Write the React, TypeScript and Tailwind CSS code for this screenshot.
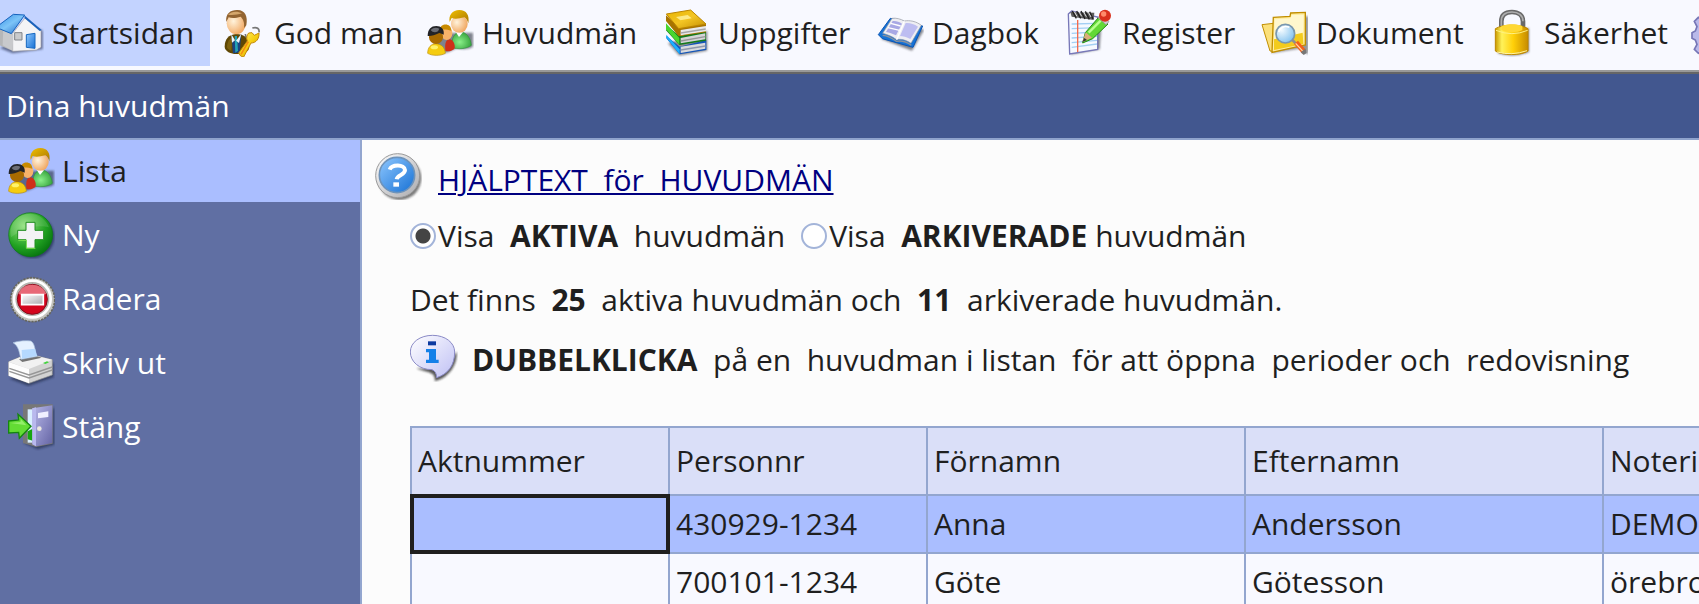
import { useState, type ReactNode } from "react";

interface IconProps {
  box: string;
  children: ReactNode;
}

// All icons are drawn on a 144 unit square and shown at 48px
function Icon({ box, children }: IconProps) {
  return (
    <svg viewBox={box} className="size-12 shrink-0" aria-hidden="true">
      {children}
    </svg>
  );
}

function Gradients() {
  return (
    <svg className="absolute size-0" aria-hidden="true">
      <defs>
        <linearGradient id="roof" x1="0" y1="0" x2="1" y2="1">
          <stop offset="0" stopColor="#2f8ae0" />
          <stop offset=".5" stopColor="#7cc4f8" />
          <stop offset="1" stopColor="#1c66c4" />
        </linearGradient>
        <linearGradient id="grey" x1="0" y1="0" x2="1" y2="1">
          <stop offset="0" stopColor="#ffffff" />
          <stop offset="1" stopColor="#a9a9ad" />
        </linearGradient>
        <linearGradient id="gold" x1="0" y1="0" x2="1" y2="1">
          <stop offset="0" stopColor="#fff27a" />
          <stop offset=".5" stopColor="#f7cf12" />
          <stop offset="1" stopColor="#b98300" />
        </linearGradient>
        <linearGradient id="cover" x1="0" y1="0" x2="1" y2="1">
          <stop offset="0" stopColor="#e8b400" />
          <stop offset=".5" stopColor="#f3c524" />
          <stop offset="1" stopColor="#c48e00" />
        </linearGradient>
        <linearGradient id="hair" x1="0" y1="0" x2="1" y2="1">
          <stop offset="0" stopColor="#f0c000" />
          <stop offset="1" stopColor="#a87400" />
        </linearGradient>
        <radialGradient id="skin" cx=".35" cy=".4" r=".7">
          <stop offset="0" stopColor="#fff3dc" />
          <stop offset="1" stopColor="#f0a35a" />
        </radialGradient>
        <radialGradient id="green" cx=".35" cy=".3" r=".8">
          <stop offset="0" stopColor="#8fe07a" />
          <stop offset=".6" stopColor="#22a322" />
          <stop offset="1" stopColor="#026c0c" />
        </radialGradient>
        <radialGradient id="shirt" cx=".4" cy=".6" r=".7">
          <stop offset="0" stopColor="#8af08a" />
          <stop offset="1" stopColor="#2c9a34" />
        </radialGradient>
        <radialGradient id="lens" cx=".3" cy=".3" r=".8">
          <stop offset="0" stopColor="#f4fbff" />
          <stop offset="1" stopColor="#7fc0ee" />
        </radialGradient>
        <linearGradient id="blue" x1="0" y1="0" x2="1" y2="1">
          <stop offset="0" stopColor="#8fc8ff" />
          <stop offset="1" stopColor="#1670d4" />
        </linearGradient>
        <linearGradient id="brass" x1="0" y1="0" x2="1" y2="0">
          <stop offset="0" stopColor="#c89a00" />
          <stop offset=".2" stopColor="#fff25a" />
          <stop offset=".55" stopColor="#ffcf08" />
          <stop offset="1" stopColor="#c78c00" />
        </linearGradient>
        <linearGradient id="bubble" x1="0" y1="0" x2="1" y2="1">
          <stop offset="0" stopColor="#ffffff" />
          <stop offset="1" stopColor="#bfc0f4" />
        </linearGradient>
        <linearGradient id="door" x1="0" y1="0" x2="1" y2="1">
          <stop offset="0" stopColor="#b9b9ea" />
          <stop offset="1" stopColor="#6464a4" />
        </linearGradient>
        <filter id="soft" x="-20%" y="-20%" width="140%" height="140%">
          <feGaussianBlur stdDeviation="3" />
        </filter>
      </defs>
    </svg>
  );
}

function HouseIcon() {
  return (
    <Icon box="-12 27 144 144">
      <path d="M0 145l38 15 90-12V92l-20-10z" fill="#3a4468" opacity=".7" filter="url(#soft)" />
      <path d="M-10 90l20-8 30 24v48l-50-22z" fill="#b5b6b8" />
      <path d="M38 100l37-46 48 38v50l-14 8-71 4z" fill="#f4f4f6" stroke="#a0a0a8" strokeWidth="2" />
      <path d="M10 84l30 20-2 48-30-16z" fill="#c8c9cc" />
      <path d="M-12 82l52-39 34 2-40 56z" fill="url(#roof)" stroke="#1762bd" strokeWidth="3" />
      <path d="M73 46l52 44-6 3-45-38z" fill="#1a62bb" />
      <path d="M44 98h22v22H44z" fill="#c9cacc" stroke="#808489" strokeWidth="3" />
      <path d="M79 104l26-4v45l-26-3z" fill="url(#blue)" stroke="#1667c0" strokeWidth="3" />
    </Icon>
  );
}

function GuardianIcon() {
  return (
    <Icon box="654 27 144 144">
      <path d="M674 140c0-22 12-36 34-38 24 0 40 12 40 38 0 16-20 22-38 22s-36-8-36-22z" fill="#5f4704" />
      <path d="M681 138c2-14 8-22 16-26l-3 40c-8-2-14-6-13-14z" fill="#8a6c14" opacity=".7" />
      <path d="M694 104l13 24 17-26-5 56-20 2z" fill="#1d447f" />
      <path d="M704 108l7 0 3 44-8 6z" fill="#23a3b6" />
      <path d="M694 103l11 18-9 7zM724 102l-16 20 9 7z" fill="#eef4fc" />
      <ellipse cx="709" cy="70" rx="29" ry="33" fill="url(#skin)" />
      <path d="M679 66c-4-26 14-37 34-36 22 1 31 18 26 46l-7 8c2-16-2-26-10-34-14 5-28 5-36 2z" fill="#936431" />
      <path d="M684 44c10-10 28-12 42-4-14 4-28 6-42 4z" fill="#d4a66b" />
      <path d="M757 84c14-4 22 2 20 13M736 102c0 12 10 18 22 12" fill="none" stroke="#777" strokeWidth="5" />
      <path d="M746 99l10-1 7 8 14-7c1 17-8 30-24 30l-22 42-9-3-6-9 26-36c-4-10-1-18 4-24z" fill="url(#gold)" stroke="#c48b0a" strokeWidth="3" />
      <path d="M723 163l22-38" stroke="#f38c12" strokeWidth="5" />
    </Icon>
  );
}

function PeopleIcon() {
  return (
    <Icon box="20 27 144 144">
      <path d="M34 160c34 10 60-8 78-15 20 5 44 2 49-6V98L60 100z" fill="#1f2430" opacity=".55" filter="url(#soft)" />
      <path d="M98 142c-2-30 8-44 24-46 20 0 32 18 34 40-12 10-42 14-58 6z" fill="url(#shirt)" stroke="#30943c" strokeWidth="2" />
      <path d="M108 94l11 17 12-14z" fill="#fff" />
      <ellipse cx="120" cy="72" rx="25" ry="26" fill="url(#skin)" />
      <path d="M91 66c-4-20 8-36 29-36 22 0 31 16 27 40-2-8-6-14-12-18-16 4-28 6-38 2z" fill="url(#hair)" />
      <path d="M78 152c-2-24 2-34 14-34 12 2 18 24 12 30-8 6-20 8-26 4z" fill="#cf3019" />
      <ellipse cx="82" cy="100" rx="17" ry="20" fill="#f8b36a" />
      <path d="M60 90c4-22 36-22 36 2-12-3-22-5-36-2z" fill="#c98b00" />
      <path d="M25 160c0-18 10-28 24-29 18 1 28 12 29 29-14 8-40 8-53 0z" fill="#f5cc10" stroke="#c29200" strokeWidth="2" />
      <ellipse cx="45" cy="142" rx="11" ry="6" fill="#fff36b" />
      <ellipse cx="50" cy="112" rx="21" ry="20" fill="#a96b00" />
      <path d="M25 108c0-20 10-30 26-30 14 0 25 10 22 26-4-2-10-4-13-5-14 7-26 10-35 9z" fill="#222327" />
      <path d="M34 90c8-8 18-8 26-4l-4 8c-8 4-16 4-22-4z" fill="#6b6d75" />
    </Icon>
  );
}

function BooksIcon() {
  return (
    <Icon box="726 27 144 144">
      <path d="M744 130l34 37 84-15V92z" fill="#222" opacity=".5" filter="url(#soft)" />
      <path d="M739 108l40 32 80-20v30l-80 13-40-48z" fill="#1455b8" />
      <path d="M739 104l40 44v15l-40-50z" fill="#1db0ff" />
      <path d="M782 140l74-12v18l-74 13z" fill="#d9dadd" />
      <path d="M782 150l74-12" stroke="#8d97ad" strokeWidth="4" />
      <path d="M738 76l42 32 78-18v32l-80 13-40-44z" fill="#137a1c" />
      <path d="M738 70l40 44v20l-40-46z" fill="#49d62e" />
      <path d="M782 114l74-14v18l-74 12z" fill="#d4d4d6" />
      <path d="M782 123l74-13" stroke="#979797" strokeWidth="4" />
      <path d="M738 46l44 38 76-13v26l-82 12-38-46z" fill="#a87400" />
      <path d="M782 90l76-12v16l-76 12z" fill="#e8e8ea" />
      <path d="M782 99l75-12" stroke="#a6a6a8" strokeWidth="4" />
      <path d="M739 42l73-12 46 42-82 14z" fill="url(#cover)" stroke="#bb8500" strokeWidth="3" />
      <path d="M768 51l35-6 12 10-34 6z" fill="#fff3a1" opacity=".8" />
    </Icon>
  );
}

function DiaryIcon() {
  return (
    <Icon box="48 27 144 144">
      <path d="M62 116l94 36 36-62-20-10z" fill="#30343c" opacity=".6" filter="url(#soft)" />
      <path d="M55 104l36-49 97 23-29 64-92-26z" fill="#1672d6" stroke="#0b55b4" strokeWidth="3" strokeLinejoin="round" />
      <path d="M68 100l28-45c12-2 26 2 37 8 16-3 36 1 51 13l-31 54c-15-10-29-14-43-11-14-10-30-16-42-19z" fill="#eeeef3" stroke="#8f949d" strokeWidth="2" />
      <path d="M78 96l20-33c10-1 20 2 28 8l-18 35c-10-5-20-8-30-10z" fill="#a8a8e4" />
      <path d="M137 69c13-1 25 3 37 11l-23 37c-11-6-22-8-31-9z" fill="#bdbdf1" />
      <path d="M133 64l-23 55M84 83l35 8M92 70l30 8" stroke="#fff" strokeWidth="4" />
      <path d="M68 106c14 1 28 8 41 18 16-3 30 1 45 12" fill="none" stroke="#8d929c" strokeWidth="4" />
    </Icon>
  );
}

function RegisterIcon() {
  return (
    <Icon box="621 27 144 144">
      <path d="M634 164l88-16 6-92-20 10z" fill="#30343c" opacity=".6" filter="url(#soft)" />
      <path d="M628 42l10-9 78 18v97l-84 14z" fill="#f6f9ff" stroke="#7777b8" strokeWidth="4" />
      <path d="M638 72l76-2M638 86l76-3M638 100l76-4M638 114l76-5M638 128l76-7M638 142l76-10" stroke="#a3cff4" strokeWidth="4" />
      <path d="M656 60v96" stroke="#f4694b" strokeWidth="4" />
      <path d="M634 36l72 2-2 22-66-10z" fill="#5c5c5c" />
      <path d="M640 33l12 22M653 33l12 22M666 33l12 24M679 34l12 24M692 35l10 22" stroke="#1f1f1f" strokeWidth="4" />
      <path d="M646 35l8 14M660 35l8 14M674 36l8 14M688 37l8 14" stroke="#ddd" strokeWidth="3" />
      <path d="M679 98l40-46 28 20-46 44-30 13z" fill="#62d836" stroke="#238b16" strokeWidth="3" />
      <path d="M689 98l36-36" stroke="#b6ff8e" strokeWidth="7" />
      <path d="M680 97l19 16-29 13z" fill="#d9ad79" />
      <path d="M676 114l8 6-14 6z" fill="#333" />
      <path d="M717 53l8-9 25 21-9 9z" fill="#cfcfd3" stroke="#8c8c8c" strokeWidth="2" />
      <circle cx="738" cy="47" r="18" fill="#d9301c" />
      <circle cx="734" cy="42" r="8" fill="#ff8a6a" />
    </Icon>
  );
}

function DocumentIcon() {
  return (
    <Icon box="2 27 144 144">
      <path d="M36 160l84-14 28 18V48l-20 4z" fill="#444" opacity=".55" filter="url(#soft)" />
      <path d="M8 74l34-4 4 85-14-2z" fill="#fbe07a" stroke="#c18e00" strokeWidth="3" />
      <path d="M42 52l50-3 2-10 44-2v98l-100 22z" fill="#ffec9c" stroke="#c18e00" strokeWidth="4" />
      <path d="M46 58l48-3 3-10 36-1-2 84-88 20z" fill="#fff7cd" />
      <path d="M44 118l86-20 2 34-88 18z" fill="#f3cb1d" />
      <circle cx="78" cy="101" r="28" fill="url(#lens)" stroke="#7a97ad" strokeWidth="5" />
      <path d="M58 96c4-14 18-20 32-14" stroke="#fff" strokeWidth="5" fill="none" />
      <path d="M99 120l10 10" stroke="#8f8f8f" strokeWidth="8" />
      <path d="M104 132l12-10 24 28-11 11z" fill="#f2601c" />
      <path d="M109 130l22 24" stroke="#ffd7a4" strokeWidth="4" />
      <path d="M124 157l14-11 4 13-9 6z" fill="#777" />
    </Icon>
  );
}

function LockIcon() {
  return (
    <Icon box="687 27 144 144">
      <path d="M716 160q48 14 94-4V84l-40 10z" fill="#333" opacity=".6" filter="url(#soft)" />
      <path d="M727 86V64c0-20 13-28 32-28s33 10 33 28v28" fill="none" stroke="#696969" strokeWidth="14" />
      <path d="M727 80V64c0-20 13-28 32-28s33 10 33 28" fill="none" stroke="#aeaeae" strokeWidth="5" />
      <path d="M709 86c22-14 76-14 98 0v67c-18 14-80 14-98 0z" fill="url(#brass)" stroke="#bd8600" strokeWidth="3" />
      <path d="M727 78c20-7 46-7 63 0v12c-17 9-45 9-63 0z" fill="#ffd833" />
      <path d="M711 91q48 20 95 0" stroke="#fff184" strokeWidth="3" fill="none" />
      <path d="M714 156q44 12 90-4" stroke="#fff4a6" strokeWidth="3" fill="none" />
    </Icon>
  );
}

function GearIcon() {
  return (
    <Icon box="1290 27 144 144">
      <path d="M1350 40l16 0 5 16 15 5 15-9 12 12-8 16 6 13 17 5v17l-17 5-6 13 8 15-12 12-15-8-15 6-5 16h-16l-6-16-14-6-15 8-12-12 8-15-5-13-10-5V98l10-5 5-13-8-16 12-12 15 9 14-5z" fill="#b9b9ea" stroke="#7676b6" strokeWidth="5" />
      <circle cx="1358" cy="106" r="18" fill="#f8f9ff" stroke="#7676b6" strokeWidth="5" />
    </Icon>
  );
}

function PlusIcon() {
  return (
    <Icon box="20 241 144 144">
      <circle cx="97" cy="318" r="65" fill="#182446" opacity=".6" filter="url(#soft)" />
      <circle cx="91" cy="312" r="66" fill="url(#green)" stroke="#0a7814" strokeWidth="2" />
      <path d="M32 320c-8-40 20-70 56-70 30 0 50 18 58 40-40-10-80 4-114 30z" fill="#fff" opacity=".12" />
      <path d="M77 275h27v24h26v28h-26v26H77v-26H52v-28h25z" fill="#f3f3f5" stroke="#208c20" strokeWidth="3" />
      <path d="M54 329h24v24h27" fill="none" stroke="#7be34e" strokeWidth="3" />
    </Icon>
  );
}

function RemoveIcon() {
  return (
    <Icon box="22 433 144 144">
      <circle cx="99" cy="507" r="66" fill="#c4c4be" stroke="#66665f" strokeWidth="5" strokeDasharray="7 3" />
      <circle cx="98" cy="505" r="55" fill="#b4b4ae" stroke="#fff" strokeWidth="8" />
      <circle cx="98" cy="506" r="45" fill="#d4051d" stroke="#87091a" strokeWidth="3" />
      <path d="M56 490c6-22 24-28 42-28s36 8 42 28c-28 6-58 6-84 0z" fill="#f2a0a8" opacity=".65" />
      <path d="M66 492h65v30H66z" fill="url(#grey)" stroke="#fff" strokeWidth="5" />
    </Icon>
  );
}

function PrinterIcon() {
  return (
    <Icon box="20 117 144 144">
      <path d="M28 236l56 22 76-26v-44z" fill="#1d2743" opacity=".6" filter="url(#soft)" />
      <path d="M25 185l58-24 73 18v46l-70 25-61-23z" fill="#d2d2d2" stroke="#8b8b8b" strokeWidth="2" />
      <path d="M25 185l58-24 73 18-70 28z" fill="#f1f1f1" />
      <path d="M25 186l61 21v43l-61-23z" fill="#fdfdfd" />
      <path d="M27 205l59 20 70-24M27 214l59 20 70-24" stroke="#969696" strokeWidth="4" fill="none" />
      <path d="M56 178l50-11 18 6-58 13z" fill="#737373" />
      <path d="M38 128c20-6 38-7 54-5 14 9 11 34 19 46l-49 9c-5-18-6-40-24-50z" fill="#e5f1ff" stroke="#a2b9d8" strokeWidth="2" />
      <path d="M64 150l40-4 6 22-45 8z" fill="#b5d9ff" />
      <path d="M128 189l12-5 6 3-11 5z" fill="#42d43c" />
    </Icon>
  );
}

function ExitIcon() {
  return (
    <Icon box="20 309 144 144">
      <path d="M70 430l42 18 50-14V320z" fill="#1d2743" opacity=".6" filter="url(#soft)" />
      <path d="M68 313h89v118l-50 10-39-12z" fill="#777" />
      <path d="M82 328h30v100H82z" fill="#d9efff" />
      <path d="M82 394l15-8v36l-15-4z" fill="#16a510" />
      <path d="M96 325l60-9v113l-48 10-12-6z" fill="url(#door)" />
      <path d="M96 325l11-3v117l-11-6z" fill="#b9b9ee" />
      <path d="M113 339l31-5v17l-31 4z" fill="#f0f0ff" />
      <circle cx="117" cy="386" r="7" fill="#ece9df" />
      <path d="M25 363l30-3-2-17 39 36-35 36-2-18-30 2z" fill="#63dc34" stroke="#15870f" strokeWidth="4" />
      <path d="M30 369l30-3 2-8 16 18z" fill="#a8f581" opacity=".7" />
    </Icon>
  );
}

function HelpIcon() {
  return (
    <Icon box="45 39 144 144">
      <circle cx="122" cy="118" r="65" fill="#222" opacity=".6" filter="url(#soft)" />
      <circle cx="116" cy="110" r="66" fill="url(#grey)" stroke="#999" strokeWidth="3" />
      <circle cx="114" cy="108" r="53" fill="url(#blue)" stroke="#6d93bb" strokeWidth="5" />
      <path d="M92 92c6-17 45-17 46 1 0 15-23 14-25 28" fill="none" stroke="#fff" strokeWidth="12" />
      <path d="M103 130h17v13h-17z" fill="#fff" />
    </Icon>
  );
}

function InfoIcon() {
  return (
    <Icon box="150 579 144 144">
      <path d="M170 682c20 12 60 8 54 38 30-4 70-40 66-88-20 30-60 54-120 50z" fill="#222" opacity=".75" filter="url(#soft)" />
      <path d="M218 583c38 0 66 22 66 50 0 40-20 66-54 77 0-12-5-21-14-24-38 0-65-24-65-53s29-50 67-50z" fill="url(#bubble)" stroke="#8a8ac6" strokeWidth="3" />
      <path d="M204 601h24v12h-24z" fill="#0c3aa0" />
      <path d="M198 624h30v32h8v10h-38v-10h9v-22h-9z" fill="#1480e8" />
    </Icon>
  );
}

const toolbarItems = [
  { label: "God man", icon: <GuardianIcon />, width: "w-[208px]" },
  { label: "Huvudmän", icon: <PeopleIcon />, width: "w-[236px]" },
  { label: "Uppgifter", icon: <BooksIcon />, width: "w-[214px]" },
  { label: "Dagbok", icon: <DiaryIcon />, width: "w-[190px]" },
  { label: "Register", icon: <RegisterIcon />, width: "w-[194px]" },
  { label: "Dokument", icon: <DocumentIcon />, width: "w-[228px]" },
  { label: "Säkerhet", icon: <LockIcon />, width: "w-[202px]" },
];

const menuItems = [
  { label: "Lista", icon: <PeopleIcon /> },
  { label: "Ny", icon: <PlusIcon /> },
  { label: "Radera", icon: <RemoveIcon /> },
  { label: "Skriv ut", icon: <PrinterIcon /> },
  { label: "Stäng", icon: <ExitIcon /> },
];

const columns = [
  { label: "Aktnummer", width: "w-[258px]" },
  { label: "Personnr", width: "w-[258px]" },
  { label: "Förnamn", width: "w-[318px]" },
  { label: "Efternamn", width: "w-[358px]" },
  { label: "Noteringar", width: "w-[400px]" },
];

const rows = [
  ["", "430929-1234", "Anna", "Andersson", "DEMO"],
  ["", "700101-1234", "Göte", "Götesson", "örebro"],
];

const radioClass =
  "size-[26px] shrink-0 appearance-none rounded-full border-2 border-[#a3b4d9] bg-white checked:bg-[radial-gradient(circle,#444_7px,transparent_8px)]";

function Toolbar() {
  return (
    <nav className="flex h-[74px] shrink-0 items-start overflow-hidden border-b-2 border-[#666] bg-[#f8f9ff]">
      <div className="flex h-[72px] min-w-full shrink-0 items-start border-b-2 border-[#999]">
        <button className="mr-2 flex h-[66px] w-[210px] shrink-0 items-center gap-2 bg-[#c3d3ff]">
          <span className="-ml-1">
            <HouseIcon />
          </span>
          Startsidan
        </button>
        {toolbarItems.map((item) => (
          <button key={item.label} className={`flex h-[66px] shrink-0 items-center gap-2 ${item.width}`}>
            {item.icon}
            {item.label}
          </button>
        ))}
        <button aria-label="Inställningar" className="flex h-[66px] shrink-0 items-center">
          <GearIcon />
        </button>
      </div>
    </nav>
  );
}

function Sidebar({ active, onSelect }: { active: string; onSelect: (label: string) => void }) {
  return (
    <aside className="flex w-[362px] shrink-0 flex-col gap-0.5 border-r-2 border-[#93a6cf] bg-[#606fa3]">
      {menuItems.map((item) => (
        <button
          key={item.label}
          onClick={() => onSelect(item.label)}
          className={`flex h-[62px] items-center gap-[7px] pl-[7px] ${
            item.label === active ? "bg-[#aabeff] text-[#1f1f1f]" : "text-white"
          }`}
        >
          {item.icon}
          {item.label}
        </button>
      ))}
    </aside>
  );
}

function ClientTable() {
  return (
    <table className="w-[1592px] table-fixed border-collapse text-left whitespace-nowrap">
      <thead>
        <tr className="h-[68px] bg-[#dadff8]">
          {columns.map((col) => (
            <th key={col.label} className={`border-2 border-[#93a6cf] px-1.5 font-normal ${col.width}`}>
              {col.label}
            </th>
          ))}
        </tr>
      </thead>
      <tbody>
        {rows.map((row, r) => (
          <tr key={row[1]} className={`h-[58px] ${r === 0 ? "bg-[#aabeff]" : "bg-[#f8f9ff]"}`}>
            {row.map((cell, c) => (
              <td
                key={c}
                className={`border-2 border-[#93a6cf] px-1.5 ${
                  r === 0 && c === 0 ? "outline-4 -outline-offset-3 outline-[#1f1f1f]" : ""
                }`}
              >
                {cell}
              </td>
            ))}
          </tr>
        ))}
      </tbody>
    </table>
  );
}

export default function App() {
  const [active, setActive] = useState("Lista");
  const [filter, setFilter] = useState("aktiva");

  return (
    <div className="flex h-screen flex-col overflow-hidden bg-[#fcfcfc] font-['Open_Sans',sans-serif] text-[30px] leading-[40px] text-[#1f1f1f]">
      <Gradients />
      <Toolbar />
      <header className="flex h-[66px] shrink-0 items-center border-b-2 border-[#8fa3cc] bg-[#42578f] pl-1.5 text-white">
        <h1>Dina huvudmän</h1>
      </header>

      <div className="flex min-h-0 grow">
        <Sidebar active={active} onSelect={setActive} />

        <main className="min-w-0 grow overflow-hidden pt-3 pl-3">
          <div className="flex items-end gap-4">
            <HelpIcon />
            <a href="#hjalp" className="whitespace-pre text-[#000080] underline decoration-2 underline-offset-2">
              HJÄLPTEXT  för  HUVUDMÄN
            </a>
          </div>

          <div className="pl-9">
            <div className="mt-4 flex gap-4 whitespace-pre">
              <label className="flex items-center gap-0.5">
                <input
                  type="radio"
                  name="filter"
                  className={radioClass}
                  checked={filter === "aktiva"}
                  onChange={() => setFilter("aktiva")}
                />
                <span>
                  Visa{"  "}
                  <b>AKTIVA</b>{"  "}huvudmän
                </span>
              </label>
              <label className="flex items-center gap-0.5">
                <input
                  type="radio"
                  name="filter"
                  className={radioClass}
                  checked={filter === "arkiverade"}
                  onChange={() => setFilter("arkiverade")}
                />
                <span>
                  Visa{"  "}
                  <b>ARKIVERADE</b> huvudmän
                </span>
              </label>
            </div>

            <p className="mt-6 whitespace-pre">
              Det finns{"  "}
              <b>25</b>{"  "}aktiva huvudmän och{"  "}
              <b>11</b>{"  "}arkiverade huvudmän.
            </p>

            <div className="mt-3.5 flex items-center gap-3.5 whitespace-pre">
              <InfoIcon />
              <p className="pt-1">
                <b>DUBBELKLICKA</b>{"  "}på en  huvudman i listan  för att öppna  perioder och  redovisning
              </p>
            </div>

            <div className="mt-11">
              <ClientTable />
            </div>
          </div>
        </main>
      </div>
    </div>
  );
}
